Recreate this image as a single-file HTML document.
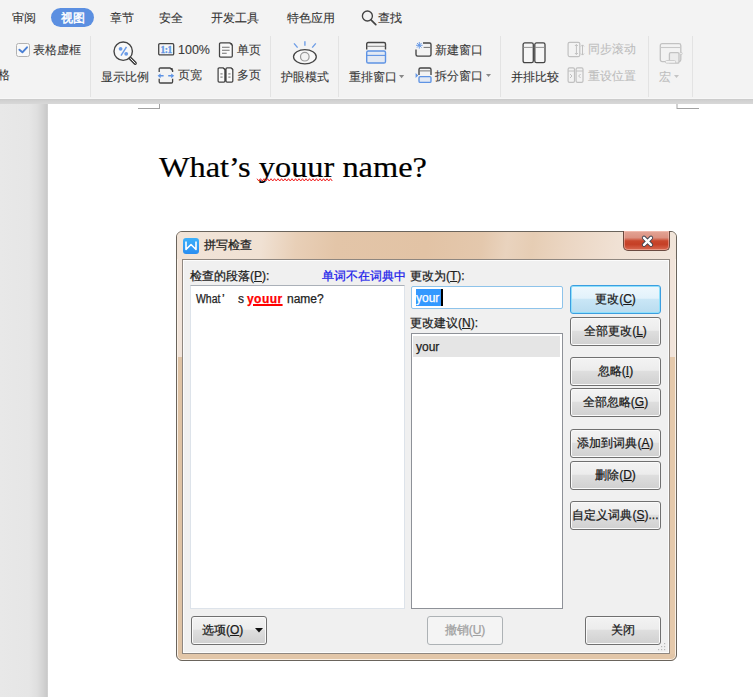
<!DOCTYPE html>
<html><head><meta charset="utf-8">
<style>
*{margin:0;padding:0;box-sizing:border-box}
html,body{width:753px;height:697px;overflow:hidden;background:#fff;font-family:"Liberation Sans",sans-serif;font-size:12px;color:#333}
.a{position:absolute;white-space:nowrap;line-height:17px}
#ribbon{position:absolute;left:0;top:0;width:753px;height:99px;background:#f3f3f3}
#band{position:absolute;left:0;top:98px;width:753px;height:7px;background:linear-gradient(#f7f7f7 0,#f7f7f7 1px,#c9c9c9 1px,#cfcfcf 2px,#d4d4d4 4px,#d8d8d8 6px,#eeeeee 6px,#eeeeee 7px)}
#leftbg{position:absolute;left:0;top:104px;width:48px;height:593px;background:linear-gradient(to right,#e8e8e8 0,#e6e6e6 29px,#dfdfdf 37px,#d3d3d3 43px,#c9c9c9 47px,#d8d8d8 48px)}
#page{position:absolute;left:48px;top:104px;width:706px;height:593px;background:#fff}
.sep{position:absolute;top:36px;width:1px;height:61px;background:#e3e3e3}
.tab{position:absolute;top:10px;line-height:17px;color:#333}
.rt{position:absolute;line-height:17px;color:#3a3a3a}
.dis{color:#bdbdbd}
svg{position:absolute;overflow:visible}
/* dialog */
#dlg{position:absolute;left:176px;top:231px;width:500px;height:429px;border:1px solid #6c655e;border-radius:7px 7px 6px 6px;
 background:linear-gradient(to bottom,#f1e3d6 0,#ecd8c4 29px,#e9d0b6 29px,#e8ceb2 100%)}
#client{position:absolute;left:6px;top:28px;width:487px;height:394px;background:#f0f0f0;border:1px solid #8a8580}
.btn{position:absolute;height:29px;border:1px solid #707070;border-radius:3px;background:linear-gradient(to bottom,#f2f2f2 0,#ebebeb 50%,#dddddd 50%,#cfcfcf 100%);text-align:center;line-height:26px;color:#222}
.lbl{position:absolute;line-height:17px;color:#222}
u{text-decoration:underline}

#dlg{position:absolute;left:176px;top:231px;width:501px;height:430px;border:1px solid #6a645c;border-radius:6px;background:#e2c6a8;box-shadow:inset 0 0 0 1px #fbf1e6}
#tb{position:absolute;left:177px;top:232px;width:499px;height:27px;border-radius:5px 5px 0 0;background:linear-gradient(97deg,#f1e4d8 0,#f0e1d3 17%,#e8cfb7 24%,#e3c5a8 32%,#e2c3a5 50%,#e4c8ad 61%,#e9d3be 66%,#e6cdb4 71%,#ebd6c3 78%,#f0e1d4 88%,#f1e5da 100%)}
#lfl{position:absolute;left:178px;top:258px;width:4px;height:99px;background:#f1e4da}
#rfl{position:absolute;left:670px;top:258px;width:5px;height:99px;background:#f1e4da}
#lfd{position:absolute;left:178px;top:357px;width:4px;height:297px;background:#dfc3a5}
#rfd{position:absolute;left:670px;top:357px;width:5px;height:297px;background:#e5c9ab}
#client{position:absolute;left:182px;top:259px;width:488px;height:395px;background:#f0f0f0;border:1px solid #8f8780;box-shadow:inset 0 0 0 1px #fcfcfc}
#wicon{position:absolute;left:183px;top:238px;width:16px;height:16px;border-radius:3px;background:linear-gradient(#3cb0fb,#2a8df0)}
#closeb{position:absolute;left:623px;top:231px;width:47px;height:20px;border:1px solid #6b4a40;border-top:none;border-radius:0 0 5px 5px;background:linear-gradient(#e3a596 0,#dc9181 35%,#c9472d 52%,#c53f26 70%,#d86a52 100%);box-shadow:inset 0 0 0 1px rgba(255,210,200,.45)}
#lb1{position:absolute;left:190px;top:285px;width:215px;height:324px;background:#fff;border:1px solid #dde3ea;border-top-color:#aab0b8}
#tf{position:absolute;left:411px;top:286px;width:152px;height:23px;background:#fff;border:1px solid #8ec3ea;border-radius:2px}
#lb2{position:absolute;left:411px;top:333px;width:152px;height:276px;background:#fff;border:1px solid #8e9198}
.btn{position:absolute;height:29px;border:1px solid #707070;border-radius:3px;background:linear-gradient(to bottom,#f3f3f3 0,#ececec 45%,#dedede 50%,#d0d0d0 100%);box-shadow:inset 0 0 0 1px #fafafa;text-align:center;line-height:27px;color:#1a1a1a;white-space:nowrap}
.btn.focus{border-color:#3c9ee0;background:linear-gradient(to bottom,#eef7fd 0,#e2f2fb 45%,#c9e6f6 50%,#b9dcef 100%);box-shadow:inset 0 0 0 1px #8fe0fb}
.btn.disb{border-color:#adb2b5;background:#f4f4f4;color:#a0a0a0;box-shadow:none}
.lbl,.btn{-webkit-text-stroke:0.25px currentColor}.rt,.tab{-webkit-text-stroke:0.1px currentColor}
</style></head><body>
<div id="ribbon"></div>
<div id="band"></div>
<div id="leftbg"></div>
<div id="page"></div>

<!-- tabs -->
<div class="tab" style="left:12px">审阅</div>
<div style="position:absolute;left:50.5px;top:7.6px;width:43.8px;height:19.8px;border-radius:10px;background:#5b8fe1"></div>
<div class="tab" style="left:61px;color:#fff;-webkit-text-stroke:0.45px #fff">视图</div>
<div class="tab" style="left:110px">章节</div>
<div class="tab" style="left:159px">安全</div>
<div class="tab" style="left:211px">开发工具</div>
<div class="tab" style="left:287px">特色应用</div>
<svg style="left:361px;top:10px" width="16" height="16" viewBox="0 0 16 16"><circle cx="6.4" cy="6" r="5" fill="none" stroke="#444" stroke-width="1.35"/><line x1="10" y1="9.8" x2="14.8" y2="14.6" stroke="#444" stroke-width="1.7" stroke-linecap="round"/></svg>
<div class="tab" style="left:378px">查找</div>

<!-- group separators -->
<div class="sep" style="left:90px"></div>
<div class="sep" style="left:270px"></div>
<div class="sep" style="left:338px"></div>
<div class="sep" style="left:500px"></div>
<div class="sep" style="left:648px"></div>
<div class="sep" style="left:692px"></div>

<!-- group 1 -->
<div style="position:absolute;left:16px;top:43px;width:14px;height:14px;border:1.3px solid #b2b2b2;border-radius:2.5px;background:#f8f8f8"></div>
<svg style="left:16px;top:43px" width="14" height="14" viewBox="0 0 14 14"><path d="M3.4 6.7 L6.4 9.3 L11 4.3" fill="none" stroke="#4a7fd4" stroke-width="1.9" stroke-linecap="round" stroke-linejoin="round"/></svg>
<div class="rt" style="left:33px;top:42px">表格虚框</div>
<div class="rt" style="left:-2px;top:67px">格</div>

<!-- group 2 -->
<svg style="left:112px;top:40px" width="28" height="28" viewBox="0 0 28 28"><circle cx="11.2" cy="11.2" r="9.2" fill="#f8f8f8" stroke="#444" stroke-width="1.4"/><line x1="18.2" y1="18.2" x2="23.2" y2="23.2" stroke="#444" stroke-width="3.4" stroke-linecap="round"/><line x1="18.6" y1="18.6" x2="23.2" y2="23.2" stroke="#f5f5f5" stroke-width="1" stroke-linecap="round"/><circle cx="8.6" cy="8.8" r="1.9" fill="#6a9be6"/><circle cx="14.2" cy="13.8" r="1.9" fill="#6a9be6"/><line x1="14.5" y1="6.8" x2="9" y2="15.6" stroke="#6a9be6" stroke-width="1.5"/></svg>
<div class="rt" style="left:101px;top:69px">显示比例</div>

<svg style="left:158px;top:43px" width="17" height="13" viewBox="0 0 17 13"><rect x="0.7" y="0.7" width="15" height="11.2" rx="1.2" fill="#f7f7f7" stroke="#444" stroke-width="1.3"/><text x="8.2" y="9.9" font-size="9.5" font-family="Liberation Serif" fill="#5e93e4" text-anchor="middle" font-weight="bold" letter-spacing="-0.4" stroke="#5e93e4" stroke-width="0.3">1:1</text></svg>
<div class="rt" style="left:178px;top:42px;font-size:12.5px">100%</div>
<svg style="left:157px;top:67px" width="18" height="17" viewBox="0 0 18 17"><path d="M2.2 5 V2.2 Q2.2 1 3.4 1 H13 L15.6 3.4 V5" fill="none" stroke="#444" stroke-width="1.3"/><path d="M13 1 L15.6 3.4 L15.6 1 Z" fill="#444"/><path d="M2.2 11.8 V14.8 Q2.2 16 3.4 16 H14.4 Q15.6 16 15.6 14.8 V11.8" fill="none" stroke="#444" stroke-width="1.3"/><path d="M3 8.8 H6.6 M14.8 8.8 H11.2" stroke="#5e93e4" stroke-width="1.4"/><path d="M0.6 8.8 L3.6 6.4 V11.2 Z M17.2 8.8 L14.2 6.4 V11.2 Z" fill="#5e93e4"/></svg>
<div class="rt" style="left:178px;top:67px">页宽</div>

<svg style="left:218px;top:42px" width="16" height="16" viewBox="0 0 16 16"><path d="M2.6 0.9 H12 L14.3 3.2 V14 Q14.3 15.1 13.2 15.1 H2.6 Q1.5 15.1 1.5 14 V2 Q1.5 0.9 2.6 0.9 Z" fill="#fafafa" stroke="#444" stroke-width="1.25"/><path d="M11.3 0.9 H13.2 Q14.3 0.9 14.3 2 V3.9 Z" fill="#444"/><path d="M4 5.3 H11.6 M4 8.3 H11.6 M4 11.3 H8.7" stroke="#707070" stroke-width="1.05"/></svg>
<div class="rt" style="left:237px;top:42px">单页</div>
<svg style="left:217px;top:67px" width="17" height="16" viewBox="0 0 17 16"><path d="M2.2 0.9 H6.2 L7.9 2.6 V14 Q7.9 15.1 6.8 15.1 H2.2 Q1.1 15.1 1.1 14 V2 Q1.1 0.9 2.2 0.9 Z M10.1 0.9 H14.1 L15.8 2.6 V14 Q15.8 15.1 14.7 15.1 H10.1 Q9 15.1 9 14 V2 Q9 0.9 10.1 0.9 Z" fill="#fafafa" stroke="#444" stroke-width="1.25"/><path d="M5.6 0.9 H6.8 Q7.9 0.9 7.9 2 V3.2 Z M13.5 0.9 H14.7 Q15.8 0.9 15.8 2 V3.2 Z" fill="#444"/><path d="M3.4 6.9 H5.6 M3.4 10.1 H5.6 M11.3 6.9 H13.5 M11.3 10.1 H13.5" stroke="#888" stroke-width="1.1"/></svg>
<div class="rt" style="left:237px;top:67px">多页</div>

<!-- group 3 eye -->
<svg style="left:290px;top:40px" width="30" height="26" viewBox="0 0 30 26"><ellipse cx="14.9" cy="16.7" rx="11.4" ry="7.1" fill="#f8f8f8" stroke="#444" stroke-width="1.3"/><circle cx="14.8" cy="16.7" r="4.3" fill="#f3f3f3" stroke="#999" stroke-width="1.2"/><path d="M14.9 1.2 V5.8 M4 3.4 L7.6 7.6 M25.8 3.4 L22.2 7.6" stroke="#6f9ee6" stroke-width="1.4"/></svg>
<div class="rt" style="left:281px;top:69px">护眼模式</div>

<!-- group 4 -->
<svg style="left:365px;top:41px" width="23" height="24" viewBox="0 0 23 24"><path d="M1.7 8.6 V3 Q1.7 1.5 3.2 1.5 H19 Q20.5 1.5 20.5 3 V8.6" fill="none" stroke="#444" stroke-width="1.4"/><line x1="1.7" y1="5.3" x2="20.5" y2="5.3" stroke="#777" stroke-width="0.9"/><rect x="1.7" y="10" width="18.8" height="12" rx="1.6" fill="#e3e9f3" stroke="#5e93e4" stroke-width="1.4"/><line x1="1.7" y1="14.4" x2="20.5" y2="14.4" stroke="#5e93e4" stroke-width="1.1"/></svg>
<div class="rt" style="left:349px;top:69px">重排窗口</div>
<svg style="left:399px;top:74.5px" width="6" height="4" viewBox="0 0 6 4"><path d="M0 0 H5.2 L2.6 3.2 Z" fill="#888"/></svg>

<svg style="left:414px;top:41px" width="19" height="17" viewBox="0 0 19 17"><path d="M9 2 H15.5 Q17 2 17 3.5 V13.6 Q17 15.1 15.5 15.1 H3.5 Q2 15.1 2 13.6 V8.5" fill="none" stroke="#444" stroke-width="1.35"/><line x1="9.6" y1="6.4" x2="16.5" y2="6.4" stroke="#777" stroke-width="1"/><path d="M5.3 1 V7.6 M2 4.3 H8.6 M3 2 L7.6 6.6 M7.6 2 L3 6.6" stroke="#5e93e4" stroke-width="0.9"/></svg>
<div class="rt" style="left:435px;top:42px">新建窗口</div>
<svg style="left:414px;top:67px" width="19" height="17" viewBox="0 0 19 17"><path d="M5 7.9 V2.5 Q5 1 6.5 1 H15.5 Q17 1 17 2.5 V7.9" fill="none" stroke="#444" stroke-width="1.35"/><line x1="5" y1="3.9" x2="17" y2="3.9" stroke="#777" stroke-width="1"/><rect x="5" y="9.6" width="12" height="5.8" rx="1.2" fill="#e3e9f3" stroke="#5e93e4" stroke-width="1.35"/><path d="M1.6 6 L4.2 8.5 L1.6 11 Z" fill="#5e93e4"/></svg>
<div class="rt" style="left:435px;top:68px">拆分窗口</div>
<svg style="left:486px;top:74px" width="6" height="4" viewBox="0 0 6 4"><path d="M0 0 H5 L2.5 3 Z" fill="#888"/></svg>

<!-- group 5 -->
<svg style="left:522px;top:42px" width="25" height="22" viewBox="0 0 25 22"><rect x="1.1" y="0.9" width="10.2" height="19.8" rx="1.7" fill="#f6f6f6" stroke="#444" stroke-width="1.3"/><rect x="12.8" y="0.9" width="10.2" height="19.8" rx="1.7" fill="#f6f6f6" stroke="#444" stroke-width="1.3"/><line x1="1.1" y1="5.4" x2="11.3" y2="5.4" stroke="#888" stroke-width="0.9"/><line x1="12.8" y1="5.4" x2="23" y2="5.4" stroke="#888" stroke-width="0.9"/></svg>
<div class="rt" style="left:511px;top:69px;color:#333">并排比较</div>
<svg style="left:567px;top:41px" width="19" height="17" viewBox="0 0 19 17"><rect x="1.1" y="1.3" width="11.7" height="14.3" rx="1.5" fill="none" stroke="#c0c0c0" stroke-width="1.2"/><path d="M9.4 3.6 V13.4 M7.9 5 L9.4 3.5 L10.9 5 M7.9 12 L9.4 13.5 L10.9 12 M15.5 4 V14 M14 5.4 L15.5 3.9 L17 5.4 M14 12.6 L15.5 14.1 L17 12.6" fill="none" stroke="#c0c0c0" stroke-width="1"/></svg>
<div class="rt dis" style="left:588px;top:41px">同步滚动</div>
<svg style="left:567px;top:66px" width="19" height="17" viewBox="0 0 19 17"><rect x="1.1" y="1.8" width="6.4" height="14.6" rx="1.4" fill="none" stroke="#c0c0c0" stroke-width="1.2"/><rect x="9.1" y="1.8" width="6.9" height="14.6" rx="1.4" fill="none" stroke="#c0c0c0" stroke-width="1.2"/><path d="M1.1 5 H7.5 M9.1 5 H16 M3 8 L5 10 L3 12 M13.6 8 L11.6 10 L13.6 12" fill="none" stroke="#c0c0c0" stroke-width="1"/></svg>
<div class="rt dis" style="left:588px;top:68px">重设位置</div>

<svg style="left:658px;top:42px" width="26" height="23" viewBox="0 0 26 23"><rect x="2.3" y="1.6" width="20.5" height="18" rx="1.8" fill="none" stroke="#c2c2c2" stroke-width="1.3"/><line x1="2.3" y1="5.5" x2="22.8" y2="5.5" stroke="#c8c8c8" stroke-width="1.1"/><rect x="11.4" y="10.6" width="9.6" height="10.6" rx="1.3" fill="#ececec" stroke="#c2c2c2" stroke-width="1.3"/><rect x="7.5" y="18.5" width="10" height="2.7" rx="1" fill="#f3f3f3" stroke="#c8c8c8" stroke-width="0.9"/><circle cx="23" cy="11.5" r="1.2" fill="#f3f3f3" stroke="#c8c8c8" stroke-width="0.9"/></svg>
<div class="rt dis" style="left:659px;top:69px">宏</div>
<svg style="left:674px;top:75px" width="6" height="4" viewBox="0 0 6 4"><path d="M0 0 H5 L2.5 3 Z" fill="#c4c4c4"/></svg>

<!-- crop marks -->
<div style="position:absolute;left:138px;top:108px;width:22px;height:1px;background:#a2a2a2"></div>
<div style="position:absolute;left:159px;top:104px;width:1px;height:5px;background:#a2a2a2"></div>
<div style="position:absolute;left:676px;top:104px;width:2px;height:5px;background:#d2d2d2"></div>
<div style="position:absolute;left:677px;top:108px;width:22px;height:1px;background:#a2a2a2"></div>

<!-- heading -->
<div id="hd" class="a" style="left:159px;top:150px;font-family:'Liberation Serif',serif;font-size:30px;line-height:34px;color:#000;-webkit-text-stroke:0.2px #000;transform:scaleX(1.079);transform-origin:0 0">What’s <span style="position:relative">youur</span> name?</div>

<svg style="left:257px;top:178px" width="76" height="4" viewBox="0 0 76 4"><path d="M0 0.7 L1.75 3.0 L3.50 0.7 L5.25 3.0 L7.00 0.7 L8.75 3.0 L10.50 0.7 L12.25 3.0 L14.00 0.7 L15.75 3.0 L17.50 0.7 L19.25 3.0 L21.00 0.7 L22.75 3.0 L24.50 0.7 L26.25 3.0 L28.00 0.7 L29.75 3.0 L31.50 0.7 L33.25 3.0 L35.00 0.7 L36.75 3.0 L38.50 0.7 L40.25 3.0 L42.00 0.7 L43.75 3.0 L45.50 0.7 L47.25 3.0 L49.00 0.7 L50.75 3.0 L52.50 0.7 L54.25 3.0 L56.00 0.7 L57.75 3.0 L59.50 0.7 L61.25 3.0 L63.00 0.7 L64.75 3.0 L66.50 0.7 L68.25 3.0 L70.00 0.7 L71.75 3.0 L73.50 0.7 L75.25 3.0" fill="none" stroke="#f02020" stroke-width="1"/></svg>
<!-- dialog -->
<div id="dlg"></div>
<div id="tb"></div>
<div id="lfl"></div><div id="lfd"></div><div id="rfl"></div><div id="rfd"></div>
<div id="client"></div>
<div id="wicon"><svg style="left:2px;top:3px" width="12" height="10" viewBox="0 0 12 10"><path d="M1 0.5 V8.5 L6 3.5 L11 8.5 V0.5" fill="none" stroke="#fff" stroke-width="1.6" stroke-linejoin="round"/></svg></div>
<div class="lbl" style="left:204px;top:237px">拼写检查</div>
<div id="closeb"><svg style="left:17px;top:5px" width="13" height="11" viewBox="0 0 13 11"><path d="M3 1.8 L10 8.8 M10 1.8 L3 8.8" stroke="#3d4552" stroke-width="4.2" stroke-linecap="round"/><path d="M3 1.8 L10 8.8 M10 1.8 L3 8.8" stroke="#fff" stroke-width="2.4" stroke-linecap="round"/></svg></div>

<div class="lbl" style="left:190px;top:268px">检查的段落(<u>P</u>):</div>
<div class="lbl" style="left:322px;top:268px;color:#1b1bea">单词不在词典中</div>
<div id="lb1"></div>
<div class="lbl" style="left:196px;top:291px;transform:scaleX(0.87);transform-origin:0 0">What</div><div class="lbl" style="left:222px;top:291px">’</div>
<div class="lbl" style="left:238px;top:291px">s</div>
<div class="lbl" style="left:247px;top:291px;color:#f00;font-weight:bold;letter-spacing:0.45px;text-decoration:underline;text-decoration-thickness:1.5px;text-underline-offset:1px">youur</div>
<div class="lbl" style="left:287px;top:291px">name?</div>

<div class="lbl" style="left:410px;top:268px">更改为(<u>T</u>):</div>
<div id="tf"></div>
<div style="position:absolute;left:416px;top:289px;width:26px;height:17px;background:#3399ff"></div>
<div class="lbl" style="left:416px;top:290px;color:#fff">your</div>
<div style="position:absolute;left:441px;top:289px;width:1.5px;height:17px;background:#000"></div>
<div class="lbl" style="left:410px;top:315px">更改建议(<u>N</u>):</div>
<div id="lb2"></div>
<div style="position:absolute;left:413px;top:336px;width:147px;height:21px;background:#e5e5e5"></div>
<div class="lbl" style="left:416px;top:339px">your</div>

<div class="btn focus" style="left:570px;top:285px;width:91px">更改(<u>C</u>)</div>
<div class="btn" style="left:570px;top:317px;width:91px">全部更改(<u>L</u>)</div>
<div class="btn" style="left:570px;top:357px;width:91px">忽略(<u>I</u>)</div>
<div class="btn" style="left:570px;top:388px;width:91px">全部忽略(<u>G</u>)</div>
<div class="btn" style="left:570px;top:429px;width:91px">添加到词典(<u>A</u>)</div>
<div class="btn" style="left:570px;top:461px;width:91px">删除(<u>D</u>)</div>
<div class="btn" style="left:570px;top:501px;width:91px">自定义词典(<u>S</u>)...</div>

<div class="btn" style="left:191px;top:616px;width:76px;text-align:left;padding-left:10px">选项(<u>O</u>)<svg style="left:63px;top:11px" width="8" height="5" viewBox="0 0 8 5"><path d="M0 0 H8 L4 4.5 Z" fill="#111"/></svg></div>
<div class="btn disb" style="left:427px;top:616px;width:76px">撤销(<u>U</u>)</div>
<div class="btn" style="left:585px;top:616px;width:76px">关闭</div>
<svg style="left:657px;top:642px" width="10" height="10" viewBox="0 0 10 10"><g fill="#b8b8b8"><rect x="7" y="1" width="1.2" height="1.2"/><rect x="4" y="4" width="1.2" height="1.2"/><rect x="7" y="4" width="1.2" height="1.2"/><rect x="1" y="7" width="1.2" height="1.2"/><rect x="4" y="7" width="1.2" height="1.2"/><rect x="7" y="7" width="1.2" height="1.2"/></g></svg>
</body></html>
